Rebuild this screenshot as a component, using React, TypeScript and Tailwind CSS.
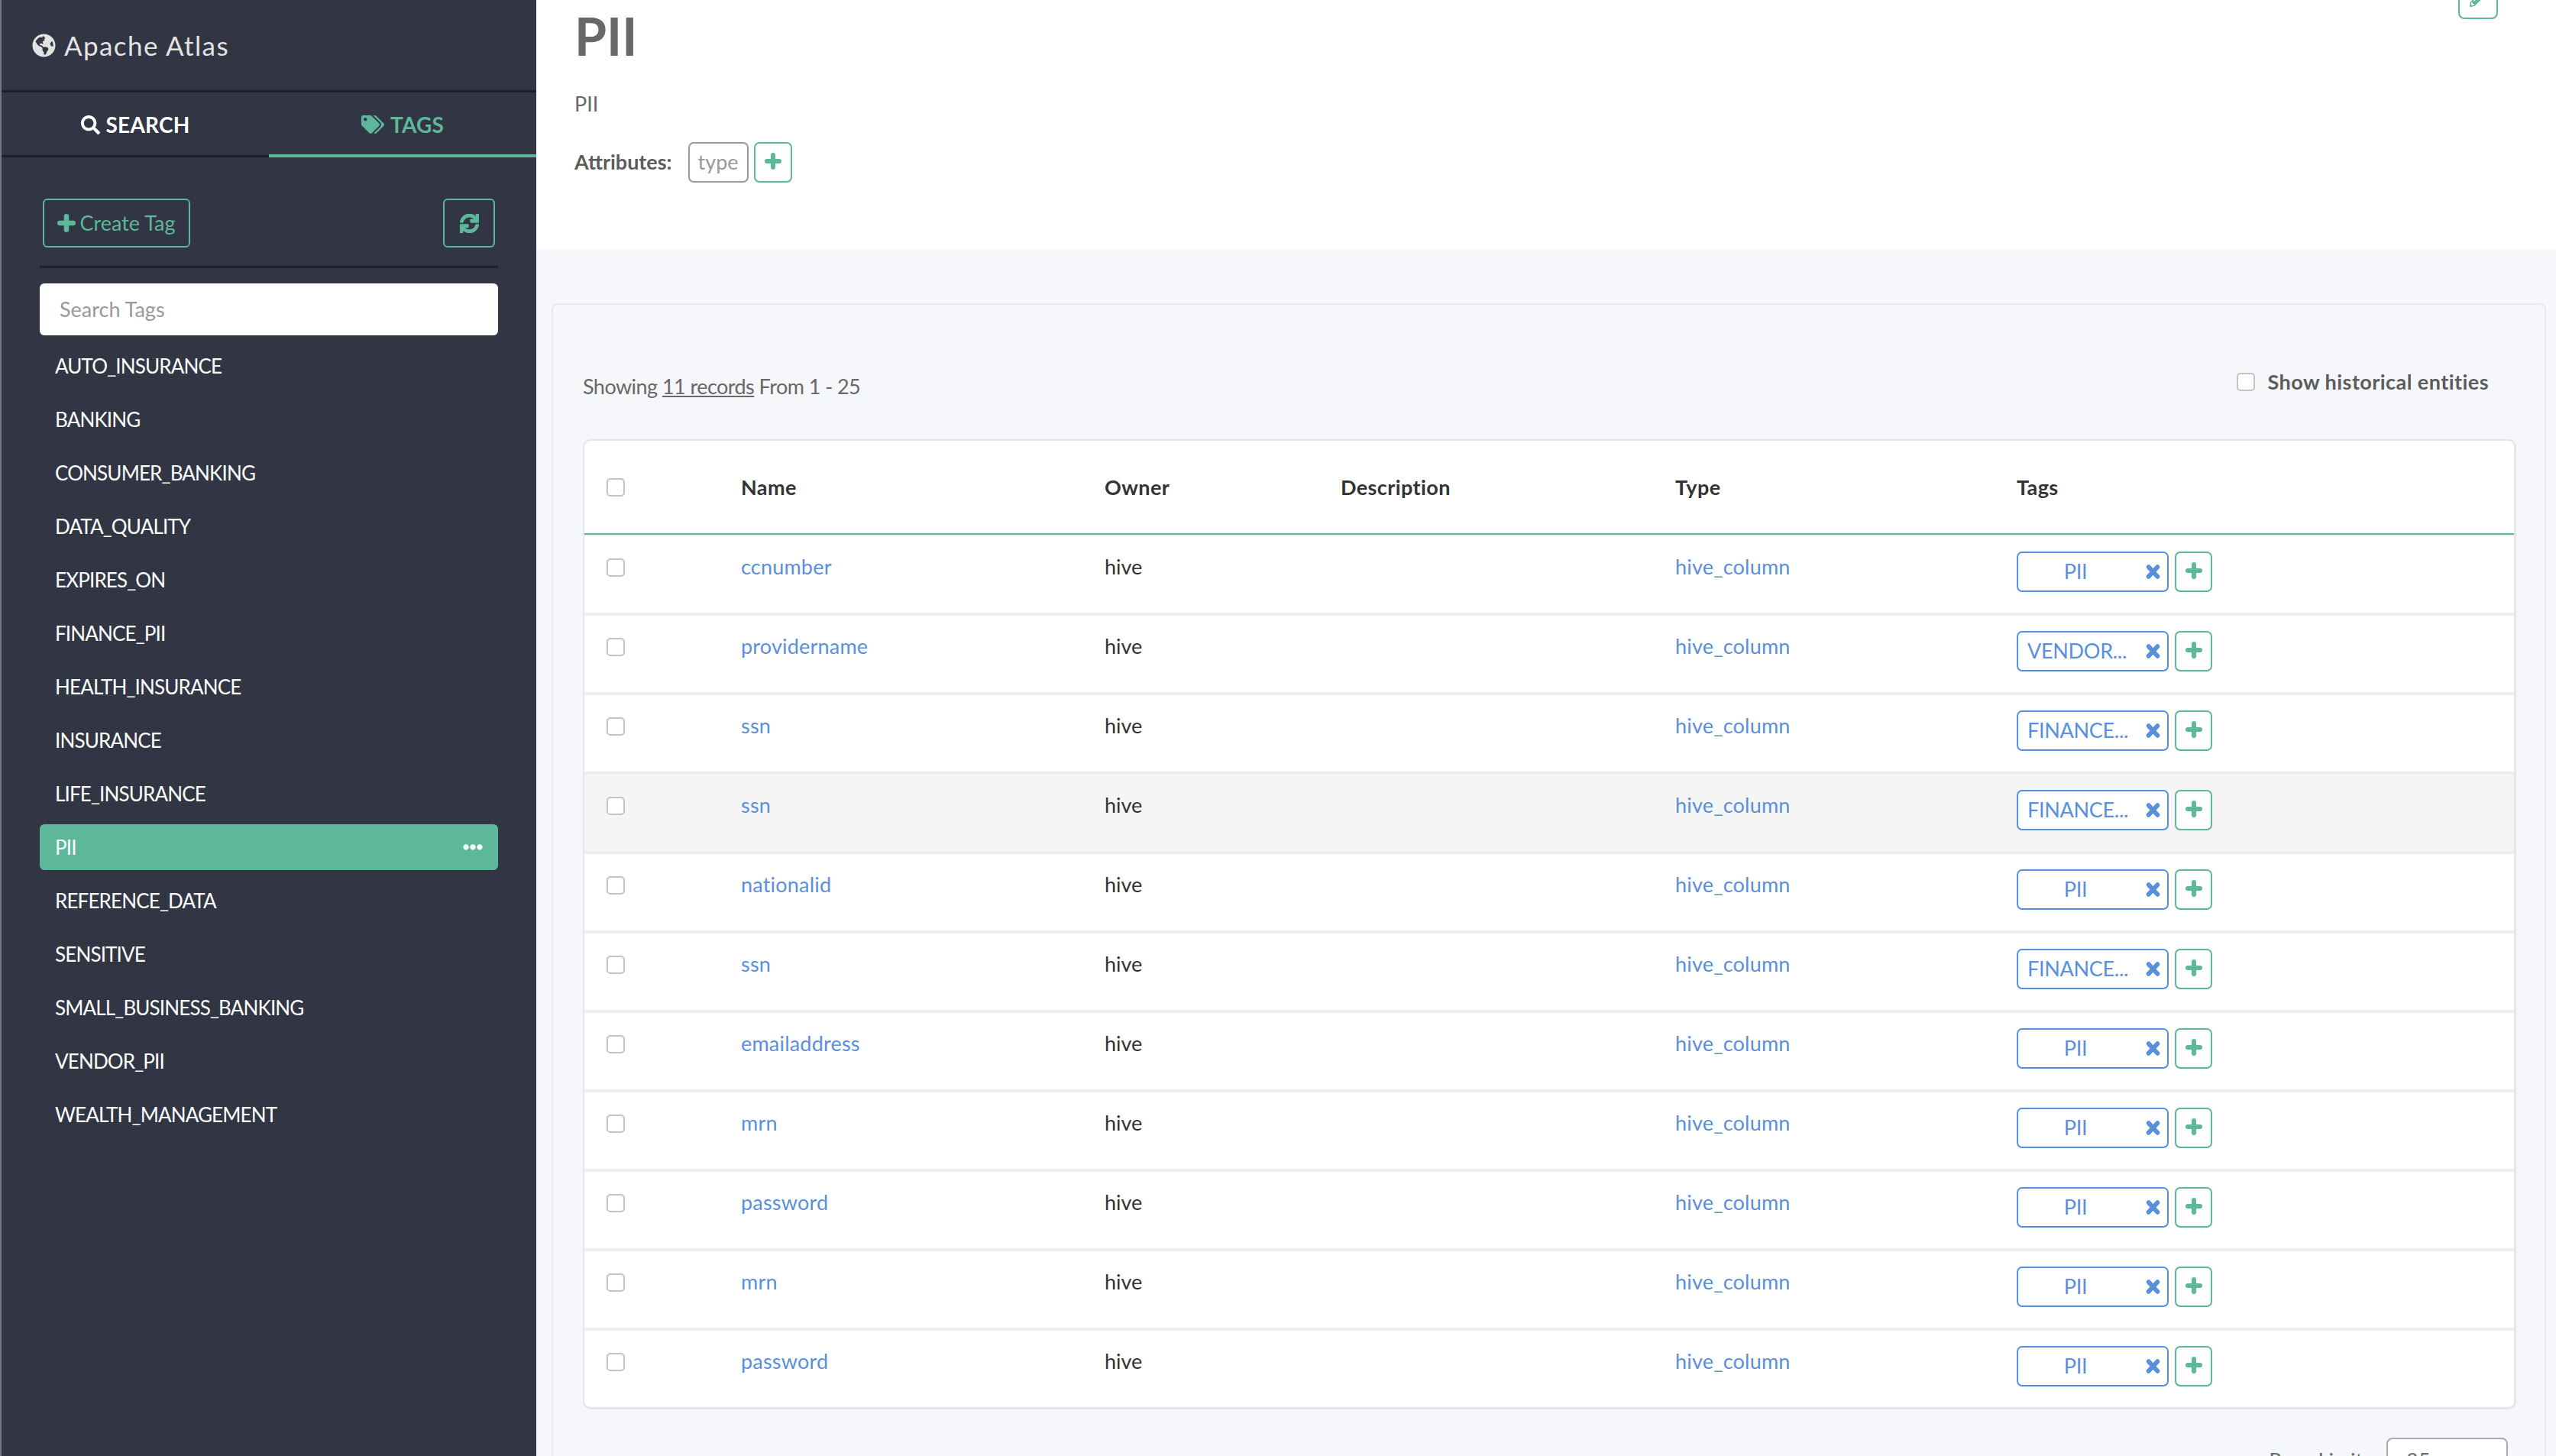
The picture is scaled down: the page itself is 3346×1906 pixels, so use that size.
import { FaGlobeAmericas, FaSearch, FaTags, FaSync, FaEllipsisH, FaPencilAlt } from "react-icons/fa";

const tags = [
  "AUTO_INSURANCE",
  "BANKING",
  "CONSUMER_BANKING",
  "DATA_QUALITY",
  "EXPIRES_ON",
  "FINANCE_PII",
  "HEALTH_INSURANCE",
  "INSURANCE",
  "LIFE_INSURANCE",
  "PII",
  "REFERENCE_DATA",
  "SENSITIVE",
  "SMALL_BUSINESS_BANKING",
  "VENDOR_PII",
  "WEALTH_MANAGEMENT",
];

const rows = [
  { name: "ccnumber", tag: "PII" },
  { name: "providername", tag: "VENDOR..." },
  { name: "ssn", tag: "FINANCE..." },
  { name: "ssn", tag: "FINANCE...", hover: true },
  { name: "nationalid", tag: "PII" },
  { name: "ssn", tag: "FINANCE..." },
  { name: "emailaddress", tag: "PII" },
  { name: "mrn", tag: "PII" },
  { name: "password", tag: "PII" },
  { name: "mrn", tag: "PII" },
  { name: "password", tag: "PII" },
];

const Checkbox = () => (
  <span className="block w-[24px] h-[24px] rounded-[5px] border-2 border-[#c4c4c4] bg-white" />
);

// heavier than the icon pack's plus, rounded ends like the old font-awesome glyph
const PlusIcon = ({ className = "w-[22px] h-[22px]" }: { className?: string }) => (
  <svg viewBox="0 0 22 22" className={className} fill="none" stroke="currentColor" strokeWidth="6" strokeLinecap="round">
    <path d="M11 3v16M3 11h16" />
  </svg>
);

const CrossIcon = () => (
  <svg viewBox="0 0 18 18" className="absolute right-[9px] w-[19px] h-[19px]" fill="none" stroke="currentColor" strokeWidth="5.5" strokeLinecap="round">
    <path d="M3.5 3 14.5 15M14.5 3 3.5 15" />
  </svg>
);

const AddButton = ({ className = "w-[50px]" }: { className?: string }) => (
  <button className={`${className} h-[53px] flex items-center justify-center pb-[4px] rounded-[7px] border-2 border-[#5db79a] bg-white text-[#5db79a]`}>
    <PlusIcon />
  </button>
);

const Sidebar = () => (
  <aside className="w-[702px] shrink-0 h-full bg-[#323543] border-l-2 border-[#777] text-white">
    <div className="h-[121px] flex items-center pl-[40px] border-b-[3px] border-[#1d1f29] text-[#e3e3e3] text-[35px] tracking-[1.4px]">
      <FaGlobeAmericas className="text-[31px] mr-[11px]" />
      <span>Apache Atlas</span>
    </div>
    <div className="flex h-[85px] text-[28px] font-bold tracking-[0.2px]">
      <div className="flex-1 flex items-center justify-center gap-[8px] pt-[2px] border-b-[3px] border-[#1d1f29]">
        <FaSearch className="text-[25px]" />
        SEARCH
      </div>
      <div className="flex-1 flex items-center justify-center gap-[8px] pt-[2px] border-b-4 border-[#5db79a] text-[#5db79a]">
        <FaTags className="text-[30px]" />
        TAGS
      </div>
    </div>
    <div className="px-[50px]">
      <div className="flex justify-between px-[4px] pt-[54px] pb-[24px] border-b-[3px] border-[#1d1f29]">
        <button className="w-[193px] h-[64px] flex items-center justify-center gap-[5px] rounded-[6px] border-2 border-[#5db79a] text-[#5db79a] text-[27px]">
          <PlusIcon className="w-[24px] h-[24px]" />
          Create Tag
        </button>
        <button className="w-[68px] h-[64px] flex items-center justify-center rounded-[6px] border-2 border-[#5db79a] text-[#5db79a] text-[25px]">
          <FaSync className="stroke-[30]" />
        </button>
      </div>
      <div className="mt-[20px] h-[68px] flex items-center rounded-[6px] bg-white pl-[26px] text-[#999] text-[27px]">
        Search Tags
      </div>
      <ul className="mt-[10px] flex flex-col gap-[10px]">
        {tags.map((tag) => (
          <li
            key={tag}
            className={`h-[60px] flex items-center justify-between pl-[20px] pr-[20px] rounded-[6px] text-[26px] tracking-[-0.85px] ${
              tag === "PII" ? "bg-[#5db79a]" : ""
            }`}
          >
            {tag}
            {tag === "PII" && <FaEllipsisH className="text-[26px]" />}
          </li>
        ))}
      </ul>
    </div>
  </aside>
);

const gridCols = "grid grid-cols-[205px_476px_309px_438px_447px_1fr]";

const App = () => (
  <div className="flex h-screen overflow-hidden bg-[#f5f7fa] font-['Lato',sans-serif] text-[27px] text-[#686868]">
    <Sidebar />
    <main className="flex-1 min-w-0">
      <header className="relative h-[326px] bg-white pl-[50px] pt-[12px]">
        <button className="absolute top-[-30px] right-[76px] w-[52px] h-[55px] flex items-end justify-center pb-[14px] rounded-[8px] border-2 border-[#5db79a] text-[#5db79a] text-[22px]">
          <FaPencilAlt />
        </button>
        <h1 className="text-[68px] leading-[70px] font-bold">PII</h1>
        <p className="mt-[36px] leading-[36px]">PII</p>
        <div className="mt-[32px] flex items-center">
          <span className="font-bold text-[#5c5c5c]">Attributes:</span>
          <span className="ml-[21px] w-[79px] h-[53px] flex items-center justify-center rounded-[7px] border-2 border-[#999] text-[#999]">
            type
          </span>
          <div className="ml-[7px]">
            <AddButton />
          </div>
        </div>
      </header>
      <section className="ml-[20px] mr-[13px] mt-[71px] rounded-[8px] border-2 border-[#e7e9ec] pl-[39px] pr-[37px]">
        <div className="h-[176px] flex justify-between pt-[89px]">
          <p className="leading-[36px] tracking-[-0.55px]">
            Showing <span className="underline">11 records</span> From 1 - 25
          </p>
          <label className="flex items-center h-[24px] mr-[36px]">
            <Checkbox />
            <span className="ml-[17px] font-bold text-[#5c5c5c] tracking-[0.45px]">Show historical entities</span>
          </label>
        </div>
        <div className="rounded-[10px] bg-white border-2 border-[#e6e6e6] border-r-[3px] border-b-[3px]">
          <div className={`${gridCols} h-[123px] pt-[1px] border-b-2 border-[#5db79a] items-center font-bold text-[#333] tracking-[0.4px]`}>
            <div className="pl-[29px]">
              <Checkbox />
            </div>
            <span>Name</span>
            <span>Owner</span>
            <span>Description</span>
            <span>Type</span>
            <span>Tags</span>
          </div>
          <div className="h-[2px] bg-[#eee]" />
          {rows.map((row, i) => (
            <div
              key={i}
              className={`${gridCols} h-[104px] last:h-[100px] border-b-4 last:border-b-0 border-[#eee] ${
                row.hover ? "bg-[#f5f5f5]" : ""
              }`}
            >
              <div className="pl-[29px] pt-[29px]">
                <Checkbox />
              </div>
              <a className="pt-[22px] leading-[36px] text-[#5a8fdc] tracking-[0.2px]">{row.name}</a>
              <span className="pt-[22px] leading-[36px] text-[#333]">hive</span>
              <span />
              <a className="pt-[22px] leading-[36px] text-[#5a8fdc] tracking-[0.2px]">hive_column</a>
              <div className="pt-[20px] flex items-start gap-[8px]">
                <span className="relative w-[199px] h-[53px] flex items-center rounded-[7px] border-2 border-[#5a8fdc] bg-white text-[#5a8fdc] pl-[12px]">
                  <span className="w-[126px] text-center whitespace-nowrap tracking-[-0.3px]">{row.tag}</span>
                  <CrossIcon />
                </span>
                <AddButton className="w-[49px]" />
              </div>
            </div>
          ))}
        </div>
        <div className="mt-[37px] flex items-center justify-end pr-[11px]">
          <span className="mr-[24px]">Page Limit:</span>
          <span className="w-[159px] h-[60px] flex items-center pl-[24px] rounded-[8px] border-2 border-[#aaa] bg-white">25</span>
        </div>
      </section>
    </main>
  </div>
);

export default App;
